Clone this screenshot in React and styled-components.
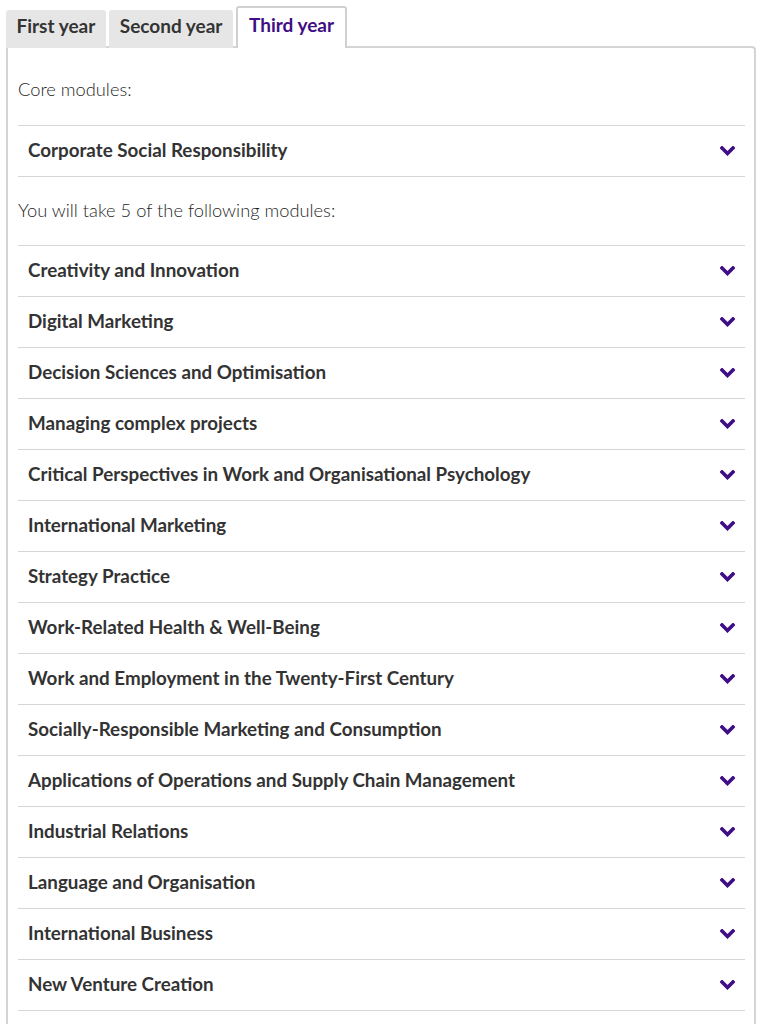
import styled, { createGlobalStyle } from 'styled-components'

const GlobalStyle = createGlobalStyle`
  body {
    margin: 0;
    background: #ffffff;
    font-family: Lato, "Open Sans", sans-serif;
    color: #333333;
  }
`

const purple = '#3f0d85'

const Page = styled.div`
  padding: 6px 6px 0 6px;
`

const TabBar = styled.div`
  display: flex;
  align-items: flex-end;
  gap: 3.5px;
  position: relative;
  z-index: 1;
  margin-bottom: -2px;
`

const Tab = styled.button`
  font-family: inherit;
  font-size: 19px;
  font-weight: 700;
  line-height: 22px;
  border-radius: 3px 3px 0 0;
  cursor: pointer;
  padding: 0 10.5px;
  color: ${({ $active }) => ($active ? purple : '#333333')};
  background: ${({ $active }) => ($active ? '#ffffff' : '#e6e6e6')};
  border: ${({ $active }) => ($active ? '2px solid #d0d0d0' : '0')};
  border-bottom: 0;
  height: ${({ $active }) => ($active ? '42px' : '38px')};
  padding-bottom: ${({ $active }) => ($active ? '6px' : '7px')};
`

const Panel = styled.div`
  border: 2px solid #d4d4d4;
  border-bottom: 0;
  border-radius: 0 4px 0 0;
  padding: 29px 9px 20px 10px;
`

const Intro = styled.p`
  margin: 0;
  font-size: 18.3px;
  font-weight: 300;
  color: #1f1f1f;
  line-height: 24px;
`

const ModuleList = styled.ul`
  list-style: none;
  margin: 24px 0 21px;
  padding: 0;
  border-top: 1px solid #d6d6d6;

  & + p + & {
    margin-top: 23px;
  }
`

const ModuleRow = styled.li`
  display: flex;
  align-items: center;
  justify-content: space-between;
  height: 50px;
  padding: 0 10px;
  border-bottom: 1px solid #d6d6d6;
  cursor: pointer;
`

const ModuleTitle = styled.span`
  font-size: 18.8px;
  font-weight: 700;
  color: #333333;
  margin-bottom: 4px;
`

const Chevron = () => (
  <svg width="15" height="10" viewBox="0 0 15 10">
    <polyline
      points="2,2 7.5,7.5 13,2"
      fill="none"
      stroke={purple}
      strokeWidth="3.6"
      strokeLinecap="square"
    />
  </svg>
)

const coreModules = ['Corporate Social Responsibility']

const optionalModules = [
  'Creativity and Innovation',
  'Digital Marketing',
  'Decision Sciences and Optimisation',
  'Managing complex projects',
  'Critical Perspectives in Work and Organisational Psychology',
  'International Marketing',
  'Strategy Practice',
  'Work-Related Health & Well-Being',
  'Work and Employment in the Twenty-First Century',
  'Socially-Responsible Marketing and Consumption',
  'Applications of Operations and Supply Chain Management',
  'Industrial Relations',
  'Language and Organisation',
  'International Business',
  'New Venture Creation',
]

function Modules({ items }) {
  return (
    <ModuleList>
      {items.map((title) => (
        <ModuleRow key={title}>
          <ModuleTitle>{title}</ModuleTitle>
          <Chevron />
        </ModuleRow>
      ))}
    </ModuleList>
  )
}

export default function App() {
  return (
    <Page>
      <GlobalStyle />
      <TabBar>
        <Tab>First year</Tab>
        <Tab>Second year</Tab>
        <Tab $active>Third year</Tab>
      </TabBar>
      <Panel>
        <Intro>Core modules:</Intro>
        <Modules items={coreModules} />
        <Intro>You will take 5 of the following modules:</Intro>
        <Modules items={optionalModules} />
      </Panel>
    </Page>
  )
}
